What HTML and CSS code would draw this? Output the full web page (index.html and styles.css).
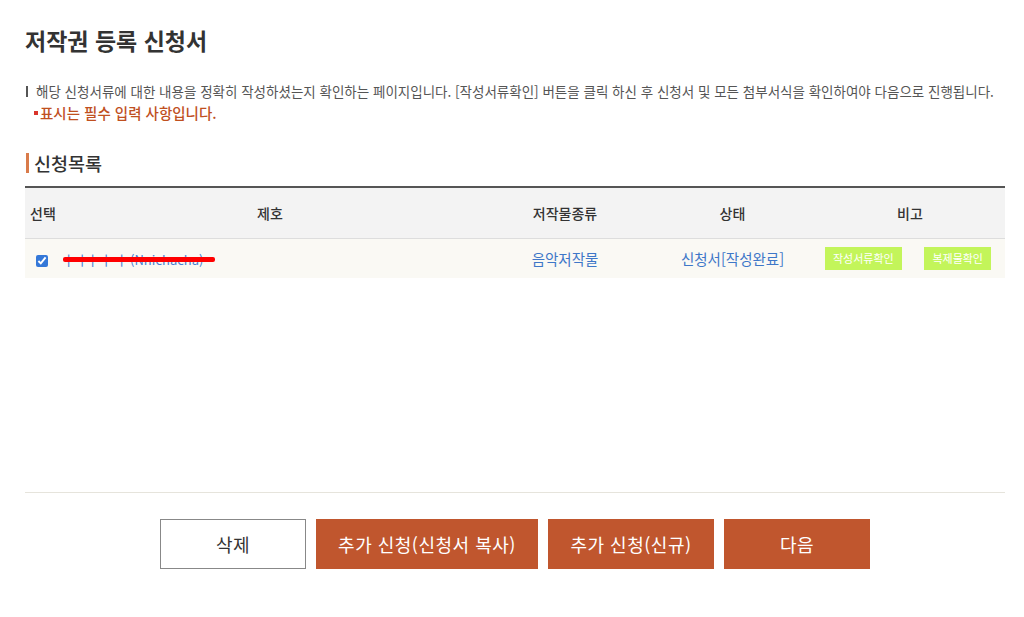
FILE: index.html
```html
<!DOCTYPE html>
<html lang="ko">
<head>
<meta charset="utf-8">
<title>저작권 등록 신청서</title>
<link rel="stylesheet" href="styles.css">
</head>
<body>
<div class="page">
  <h1 class="title">저작권 등록 신청서</h1>
  <p class="desc">해당 신청서류에 대한 내용을 정확히 작성하셨는지 확인하는 페이지입니다. [작성서류확인] 버튼을 클릭 하신 후 신청서 및 모든 첨부서식을 확인하여야 다음으로 진행됩니다.</p>
  <p class="note"><span class="dot"></span>표시는 필수 입력 사항입니다.</p>

  <h2 class="section">신청목록</h2>
  <table class="list">
    <colgroup>
      <col class="c-sel"><col class="c-title"><col class="c-kind"><col class="c-state"><col class="c-etc">
    </colgroup>
    <thead>
      <tr>
        <th class="left">선택</th>
        <th>제호</th>
        <th>저작물종류</th>
        <th>상태</th>
        <th>비고</th>
      </tr>
    </thead>
    <tbody>
      <tr>
        <td class="left"><input type="checkbox" class="chk" checked></td>
        <td class="left"><span class="work">ㅏㅓㅏㅓ ㅓ (Nnichacha)<span class="redact"></span></span></td>
        <td class="link">음악저작물</td>
        <td class="link">신청서[작성완료]</td>
        <td><div class="etc"><span class="tag">작성서류확인</span><span class="tag">복제물확인</span></div></td>
      </tr>
    </tbody>
  </table>

  <div class="spacer"></div>
  <div class="actions">
    <button class="btn btn-white w1">삭제</button>
    <button class="btn btn-orange w2">추가 신청(신청서 복사)</button>
    <button class="btn btn-orange w3">추가 신청(신규)</button>
    <button class="btn btn-orange w4">다음</button>
  </div>
</div>
</body>
</html>
```
FILE: styles.css
```css
* { box-sizing: border-box; }
html, body { margin: 0; padding: 0; background: #fff; }
body {
  font-family: "Noto Sans CJK KR", "Noto Sans", sans-serif;
  color: #333;
}
.page {
  width: 980px;
  margin-left: 25px;
  padding-top: 24px;
}
.title {
  margin: 0;
  font-size: 23px;
  font-weight: 700;
  line-height: 32px;
  color: #333;
}
.desc {
  margin: 26px 0 0 0;
  padding-left: 11px;
  position: relative;
  font-size: 13.5px;
  line-height: 18px;
  color: #555;
  white-space: nowrap;
}
.desc::before {
  content: "";
  position: absolute;
  left: 1px;
  top: 4px;
  width: 2px;
  height: 11px;
  background: #555;
}
.note {
  margin: 4px 0 0 0;
  padding-left: 9px;
  font-size: 14.5px;
  line-height: 18px;
  color: #c0501f;
  font-weight: 500;
  display: flex;
  align-items: center;
}
.dot {
  width: 4px;
  height: 4px;
  background: #d9342b;
  margin-right: 2px;
}
.section {
  margin: 31px 0 0 1px;
  padding-left: 5px;
  border-left: 3px solid #d97b4a;
  font-size: 18.5px;
  font-weight: 500;
  line-height: 20px;
  color: #333;
}
.list {
  width: 980px;
  margin-top: 13px;
  border-collapse: collapse;
  table-layout: fixed;
  border-top: 2px solid #555;
}
.c-sel { width: 35px; }
.c-title { width: 420px; }
.c-kind { width: 170px; }
.c-state { width: 165px; }
.c-etc { width: 190px; }
.list th {
  height: 51px;
  background: #f3f3f3;
  border-bottom: 1px solid #ddd;
  font-size: 14px;
  font-weight: 500;
  color: #333;
  text-align: center;
  padding: 0;
}
.list th.left { text-align: left; padding-left: 5px; }
.list td {
  height: 40px;
  background: #faf9f4;
  font-size: 14.5px;
  text-align: center;
  padding: 0;
}
.list td.left { text-align: left; }
.chk {
  margin: 0 0 0 11px;
  width: 12px;
  height: 12px;
  vertical-align: middle;
  accent-color: #3478d8;
}
.work {
  position: relative;
  display: inline-block;
  margin-left: 3px;
  color: #4a7fd0;
  font-size: 13px;
}
.redact {
  position: absolute;
  left: 0;
  top: 7px;
  width: 152px;
  height: 5px;
  border-radius: 2px;
  background: #ff0000;
}
.link { color: #3e77c8; }
.etc {
  display: flex;
  justify-content: space-between;
  padding: 0 14px 0 10px;
}
.tag {
  background: #c3f55a;
  color: #fff;
  font-size: 11px;
  line-height: 23px;
  height: 23px;
  padding: 0 8px;
}
.spacer {
  margin-top: 214px;
  border-top: 1px solid #e6e4dc;
}
.actions {
  display: flex;
  justify-content: center;
  gap: 10px;
  margin-top: 26px;
}
.btn {
  height: 50px;
  font-family: inherit;
  font-size: 18px;
  letter-spacing: 0.5px;
  border: none;
  padding: 0;
  cursor: pointer;
}
.btn-white { background: #fff; border: 1px solid #888; color: #333; }
.btn-orange { background: #c0562e; color: #fff; }
.w1 { width: 146px; }
.w2 { width: 222px; }
.w3 { width: 166px; }
.w4 { width: 146px; }
```
